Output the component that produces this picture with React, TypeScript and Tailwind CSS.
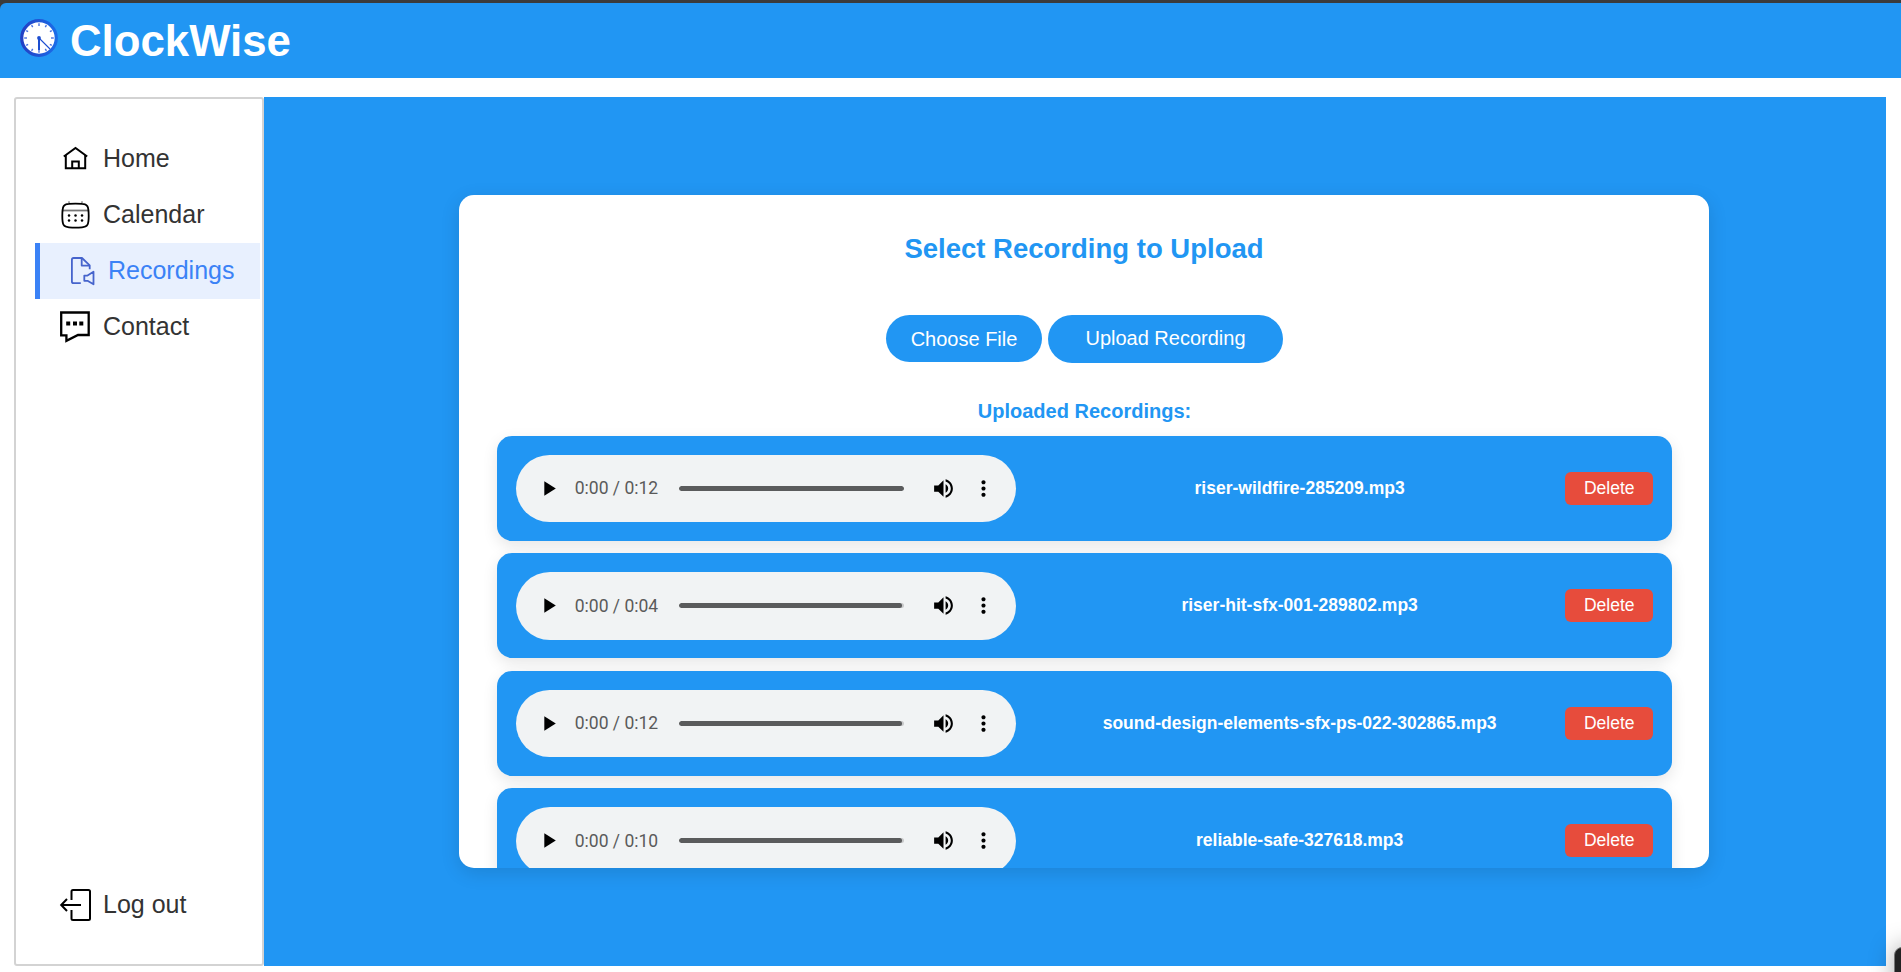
import React from "react";

type Recording = { name: string; duration: string; full?: boolean };

const recordings: Recording[] = [
  { name: "riser-wildfire-285209.mp3", duration: "0:12", full: true },
  { name: "riser-hit-sfx-001-289802.mp3", duration: "0:04" },
  { name: "sound-design-elements-sfx-ps-022-302865.mp3", duration: "0:12" },
  { name: "reliable-safe-327618.mp3", duration: "0:10" },
];

function ClockIcon() {
  const ticks = Array.from({ length: 12 }, (_, i) => i * 30);
  return (
    <svg width="38" height="38" viewBox="0 0 38 38" className="shrink-0">
      <defs>
        <linearGradient id="ring" x1="0" y1="0" x2="1" y2="0">
          <stop offset="0" stopColor="#2340c4" />
          <stop offset="1" stopColor="#1a6ce8" />
        </linearGradient>
      </defs>
      <circle cx="19" cy="19" r="17.300" fill="#fff" stroke="url(#ring)" strokeWidth="3.200" />
      {ticks.map((a) => (
        <line key={a} x1="19" y1="4.200" x2="19" y2={a % 90 === 0 ? 7 : 6.4} stroke="#4a72e0" strokeWidth="1.400" transform={`rotate(${a} 19 19)`} />
      ))}
      <path d="M19 19V31" stroke="#1d4ed0" strokeWidth="2" />
      <path d="M19 19L30 30" stroke="#1d4ed0" strokeWidth="1.100" />
      <circle cx="19" cy="19" r="1.900" fill="#1d4ed0" />
    </svg>
  );
}

function HomeIcon() {
  return (
    <svg width="32" height="32" viewBox="0 0 32 32" fill="none" stroke="#000" strokeWidth="2">
      <path d="M4.800 13.500L16.500 5L28.200 13.500" />
      <path d="M6.800 12V25.300H26.200V12" />
      <path d="M13.200 25.300V18.500H19.800V25.300" />
    </svg>
  );
}

function CalendarIcon() {
  const xs = [10, 16.5, 23];
  const ys = [16.6, 21.6];
  return (
    <svg width="32" height="32" viewBox="0 0 32 32" fill="none">
      <path d="M10 2.200V5M23 2.200V5" stroke="#777" strokeWidth="1.300" />
      <path d="M3.500 11.500H29.500" stroke="#777" strokeWidth="1.800" />
      <path d="M3.300 17C3.300 7 4.500 5 10 4.800Q16.500 4.400 23 4.800C28.500 5 29.700 7 29.700 17C29.700 26 28.500 28 23 28.300Q16.500 28.800 10 28.300C4.500 28 3.300 26 3.300 17Z" stroke="#000" strokeWidth="1.800" />
      {ys.map((y) => xs.map((x) => <circle key={`${x}-${y}`} cx={x} cy={y} r="1.250" fill="#000" />))}
    </svg>
  );
}

function RecordingIcon() {
  return (
    <svg width="32" height="32" viewBox="0 0 32 32" fill="none" stroke="#4664cc" strokeWidth="1.800" strokeLinejoin="round">
      <path d="M16.800 28.200H9.600Q7.900 28.200 7.900 26.500V4.800Q7.900 3 9.600 3H18L25.700 10.300V14.200" />
      <path d="M17.700 3.300V10.600H25.700" />
      <path d="M20.300 20.600H23.500L29.500 16.800V29.300L23.500 25.800H20.300Z" />
    </svg>
  );
}

function ContactIcon() {
  return (
    <svg width="32" height="32" viewBox="0 0 32 32" fill="none">
      <path d="M2.200 1.500H29.700V24H19L7.400 29.800V24.300H2.200Z" stroke="#000" strokeWidth="2.300" />
      <path d="M7.200 10.500H11.200V14.500H7.200ZM14 10.500H18V14.500H14ZM20.300 10.500H24.300V14.500H20.300Z" fill="#000" />
    </svg>
  );
}

function LogoutIcon() {
  return (
    <svg width="32" height="34" viewBox="0 0 32 34" fill="none" stroke="#000" strokeWidth="2">
      <path d="M12.500 12V3.500Q12.500 2 14 2H29.500Q31 2 31 3.500V30.500Q31 32 29.500 32H14Q12.500 32 12.500 30.500V22" />
      <path d="M22 17H2.500M8 11L2.200 17L8 23" />
    </svg>
  );
}

function NavItem({ icon, label, active }: { icon: React.ReactNode; label: string; active?: boolean }) {
  return (
    <a
      className={
        active
          ? "flex h-14 items-center border-l-[5px] border-[#3b82f6] bg-[#e8f0fe] pl-[24px] text-[#3b82f6]"
          : "flex h-14 items-center pl-[24px] text-[#333]"
      }
    >
      {icon}
      <span className="ml-3 pb-[2px] text-[25px] leading-none">{label}</span>
    </a>
  );
}

function AudioPlayer({ duration, full }: { duration: string; full?: boolean }) {
  return (
    <div className="flex h-[67.5px] w-[500px] shrink-0 items-center rounded-[34px] bg-[#f1f3f4] pl-[20px]">
      <svg width="25" height="25" viewBox="0 0 24 24" fill="#000">
        <path d="M8 5v14l11-7z" />
      </svg>
      <span className="ml-[14px] w-[84px] pt-[1px] font-[Roboto] text-[17.5px] leading-none whitespace-nowrap text-[#5a5a5a]">0:00 / {duration}</span>
      <div className="ml-5 flex h-[5px] w-[225px] overflow-hidden rounded-full bg-[#c8c9ca]">
        <div className={full ? "w-full rounded-full bg-[#5a5b5c]" : "w-[223px] rounded-full bg-[#5a5b5c]"} />
      </div>
      <svg width="25" height="25" viewBox="0 0 24 24" fill="#000" className="ml-[27px]">
        <path d="M3 9v6h4l5 5V4L7 9H3zm13.500 3c0-1.770-1.020-3.290-2.500-4.030v8.050c1.480-.73 2.500-2.250 2.500-4.020zM14 3.230v2.060c2.890.86 5 3.540 5 6.710s-2.110 5.850-5 6.710v2.060c4.010-.91 7-4.490 7-8.770s-2.990-7.860-7-8.770z" />
      </svg>
      <svg width="25" height="25" viewBox="0 0 24 24" fill="#000" className="ml-[15px]">
        <path d="M12 8c1.100 0 2-.9 2-2s-.9-2-2-2-2 .9-2 2 .9 2 2 2zm0 2c-1.100 0-2 .9-2 2s.9 2 2 2 2-.9 2-2-.9-2-2-2zm0 6c-1.100 0-2 .9-2 2s.9 2 2 2 2-.9 2-2-.9-2-2-2z" />
      </svg>
    </div>
  );
}

export default function App() {
  return (
    <div className="relative flex h-[972px] w-full flex-col overflow-hidden bg-white font-['Liberation_Sans',Arial,sans-serif]">
      <div className="bg-[#3b3b3b] pt-[3px]">
        <header className="flex h-[75px] items-center rounded-tl-[6px] bg-[#2196f3] pl-5">
          <div className="-mt-[5px]">
            <ClockIcon />
          </div>
          <h1 className="ml-3 text-[43.75px] leading-none font-bold text-white">ClockWise</h1>
        </header>
      </div>

      <div className="mt-[19px] mr-[15px] ml-[14px] flex h-[869px]">
        <nav className="flex w-[250px] shrink-0 flex-col rounded-[3px] border-2 border-[#d3d3d3] bg-white pt-[32px] pr-[2px] pl-[19px]">
          <NavItem icon={<HomeIcon />} label="Home" />
          <NavItem icon={<CalendarIcon />} label="Calendar" />
          <NavItem icon={<RecordingIcon />} label="Recordings" active />
          <NavItem icon={<ContactIcon />} label="Contact" />
          <div className="mt-auto mb-[31px]">
            <NavItem icon={<LogoutIcon />} label="Log out" />
          </div>
        </nav>

        <main className="flex flex-1 items-start justify-center bg-[#2196f3] pt-[98px] pl-[19px]">
          <section className="mr-[1px] flex h-[673px] w-[1250px] flex-col items-center overflow-hidden rounded-[15px] bg-white px-[37.5px] shadow-[0_5px_19px_rgba(0,0,0,0.12)]">
            <h2 className="mt-[39px] text-[27.5px] leading-[30px] font-bold text-[#2196f3]">Select Recording to Upload</h2>
            <div className="mt-[51px] flex h-12 items-start gap-[6px]">
              <button className="h-[47px] w-[156px] rounded-full bg-[#2196f3] pl-[1px] text-[20px] text-white">Choose File</button>
              <button className="h-12 w-[235px] rounded-full bg-[#2196f3] pb-[3px] pl-[1px] text-[20px] text-white">Upload Recording</button>
            </div>
            <h3 className="mt-[37px] pl-[1px] text-[20px] leading-[23px] font-bold text-[#2196f3]">Uploaded Recordings:</h3>
            <ul className="mt-[12.9px] flex w-full flex-col gap-[12.5px]">
              {recordings.map((r) => (
                <li key={r.name} className="flex h-[105px] shrink-0 items-center rounded-[15px] bg-[#2196f3] pr-[18.75px] pl-[19.25px] shadow-[0_5px_15px_rgba(0,0,0,0.1)]">
                  <AudioPlayer duration={r.duration} full={r.full} />
                  <span className="ml-[18.75px] flex-1 text-center text-[17.5px] leading-none font-bold text-white">{r.name}</span>
                  <button className="h-[33px] w-[88px] rounded-[6px] bg-[#e74c3c] pl-[1px] text-[17.5px] leading-none text-white">Delete</button>
                </li>
              ))}
            </ul>
          </section>
        </main>
      </div>

      <div className="absolute top-[947px] left-[1894px] h-[40px] w-[40px] rounded-[8px] border border-[#777] bg-[#222] shadow-[0_0_25px_rgba(0,0,0,0.35)]" />
    </div>
  );
}
